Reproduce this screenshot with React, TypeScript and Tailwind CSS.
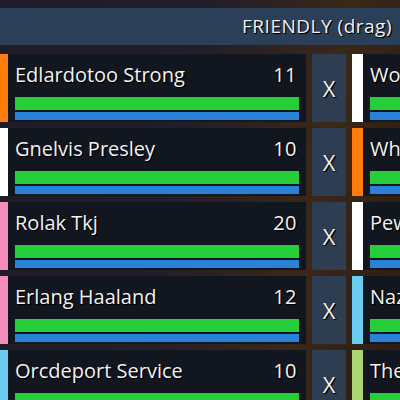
import React from "react";

type Row = { name: string; num: string; color: string; rname: string; rcolor: string };

const rows: Row[] = [
  { name: "Edlardotoo Strong", num: "11", color: "bg-[#ff7c0a]", rname: "Wonderful Woman", rcolor: "bg-[#ffffff]" },
  { name: "Gnelvis Presley", num: "10", color: "bg-[#ffffff]", rname: "Whitney Houston", rcolor: "bg-[#ff7c0a]" },
  { name: "Rolak Tkj", num: "20", color: "bg-[#f48cba]", rname: "Pewdiepie Tank", rcolor: "bg-[#ffffff]" },
  { name: "Erlang Haaland", num: "12", color: "bg-[#f48cba]", rname: "Nazgul Ringwraith", rcolor: "bg-[#69ccf0]" },
  { name: "Orcdeport Service", num: "10", color: "bg-[#69ccf0]", rname: "The Thrall Guy", rcolor: "bg-[#abd473]" },
];

const font = "font-['Open_Sans','Lato',sans-serif]";
const shadow = "[text-shadow:1px_1px_0_#000,1px_1px_1px_#000]";

function Panel({ name, num, color }: { name: string; num?: string; color: string }) {
  return (
    <div className="flex h-[68px] shrink-0">
      <div className={`w-[11px] shrink-0 ${color}`} />
      <div className="flex flex-col bg-[#11161f] px-[7px] w-[298px] shrink-0">
        <div className={`flex justify-between items-start h-[43px] pt-[8px] text-[20px] leading-[25px] text-[#f2f2f2] whitespace-nowrap ${shadow}`}>
          <span>{name}</span>
          {num && <span className="pr-[2px] tracking-[0.5px]">{num}</span>}
        </div>
        <div className="h-[13px] bg-[#26cf3a]" />
        <div className="h-[8px] mt-[2px] bg-[#2a82d8]" />
      </div>
    </div>
  );
}

export default function App() {
  return (
    <div
      className={`w-[400px] h-[400px] overflow-hidden relative ${font} bg-[linear-gradient(100deg,#1e1c28_0%,#231e29_45%,#3a2818_75%,#2a1c14_100%)]`}
    >
      <div className="h-[8px]" />
      <div className={`h-[37px] bg-[#2b4058] flex items-center justify-end pr-[8px] text-[19px] tracking-[0.5px] text-[#f2f2f2] ${shadow}`}>
        FRIENDLY (drag)
      </div>
      <div className="flex flex-col gap-[6px] mt-[9px] -ml-[3px]">
        {rows.map((r) => (
          <div key={r.name} className="flex gap-[6px]">
            <Panel name={r.name} num={r.num} color={r.color} />
            <div className={`w-[34px] h-[68px] shrink-0 bg-[#2e3d52] flex items-center justify-center text-[22px] text-[#f2f2f2] ${shadow}`}>
              X
            </div>
            <Panel name={r.rname} color={r.rcolor} />
          </div>
        ))}
      </div>
    </div>
  );
}
